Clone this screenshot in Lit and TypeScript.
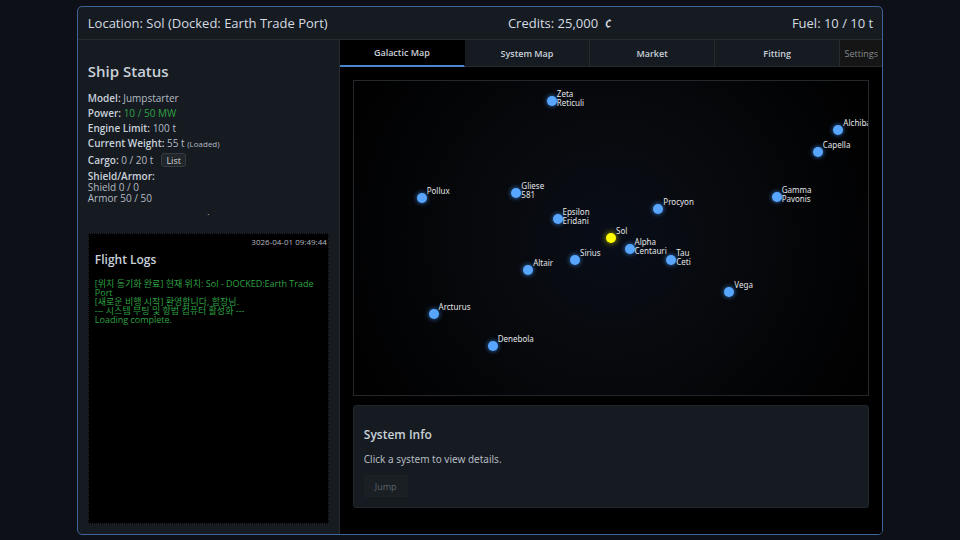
import { LitElement, html, css } from "lit";
import { customElement, property, state } from "lit/decorators.js";
import { classMap } from "lit/directives/class-map.js";
import { styleMap } from "lit/directives/style-map.js";

interface StarSystem {
  name: string;
  x: number;
  y: number;
}

const SYSTEMS: StarSystem[] = [
  { name: "Zeta Reticuli", x: 38.5, y: 6.4 },
  { name: "Alchiba", x: 94.2, y: 15.5 },
  { name: "Capella", x: 90.2, y: 22.5 },
  { name: "Pollux", x: 13.2, y: 37.4 },
  { name: "Gliese 581", x: 31.6, y: 35.8 },
  { name: "Gamma Pavonis", x: 82.2, y: 37.1 },
  { name: "Epsilon Eridani", x: 39.6, y: 43.8 },
  { name: "Procyon", x: 59.2, y: 40.8 },
  { name: "Sol", x: 50, y: 50 },
  { name: "Alpha Centauri", x: 53.6, y: 53.5 },
  { name: "Sirius", x: 43, y: 57 },
  { name: "Tau Ceti", x: 61.7, y: 57 },
  { name: "Altair", x: 33.9, y: 60.3 },
  { name: "Vega", x: 73, y: 67.2 },
  { name: "Arcturus", x: 15.5, y: 74.1 },
  { name: "Denebola", x: 27, y: 84.5 },
];

const TABS = ["Galactic Map", "System Map", "Market", "Fitting"];

const LOGS = [
  "[위치 동기화 완료] 현재 위치: Sol - DOCKED:Earth Trade Port",
  "[새로운 비행 시작] 환영합니다, 함장님.",
  "--- 시스템 부팅 및 항법 컴퓨터 활성화 ---",
  "Loading complete.",
];

@customElement("galactic-map")
export class GalacticMap extends LitElement {
  @property() current = "Sol";

  static styles = css`
    :host {
      display: block;
      position: relative;
      overflow: hidden;
      border: 1px solid #24282c;
      background: radial-gradient(circle, #080d18 0%, #080a0e 35%, #000 100%);
    }
    .star {
      position: absolute;
      width: 10px;
      height: 10px;
      margin: -5px 0 0 -5px;
      padding: 0;
      border: 0;
      border-radius: 50%;
      background: #58a6ff;
      box-shadow: 0 0 5px #3a7fd0;
      font: inherit;
      cursor: pointer;
    }
    .current {
      background: #ff0;
      box-shadow: 0 0 6px #b5b500;
    }
    .label {
      position: absolute;
      left: 10px;
      top: -7px;
      width: min-content;
      font-family: "Noto Sans", "Noto Sans CJK KR", sans-serif;
      font-size: 8px;
      line-height: 9px;
      color: #e2e5e8;
      text-align: left;
    }
  `;

  render() {
    return SYSTEMS.map(
      (s) => html`<button
        class=${classMap({ star: true, current: s.name === this.current })}
        style=${styleMap({ left: `${s.x}%`, top: `${s.y}%` })}
      ><span class="label">${s.name}</span></button>`
    );
  }
}

@customElement("ship-status")
export class ShipStatus extends LitElement {
  static styles = css`
    :host {
      display: block;
    }
    h2 {
      margin: 0 0 12px;
      font-size: 15px;
      line-height: 20px;
      font-weight: 600;
    }
    .rows {
      display: flex;
      flex-direction: column;
      gap: 4px;
      font-size: 10px;
      line-height: 11px;
      color: #b4bac1;
    }
    .rows p {
      margin: 0;
    }
    b {
      font-weight: 600;
      color: #c9d1d9;
    }
    .good {
      color: #2ea043;
    }
    .small {
      font-size: 8px;
    }
    .cargo {
      display: flex;
      align-items: center;
      gap: 8px;
    }
    .list {
      height: 14px;
      padding: 0 4px;
      border: 1px solid #363b42;
      border-radius: 3px;
      background: #21262a;
      color: #d5d9dd;
      font: inherit;
      font-size: 9px;
      line-height: 11px;
    }
    .note {
      margin: 3px 0 0;
      font-size: 8px;
      line-height: 10px;
      text-align: center;
    }
  `;

  render() {
    return html`
      <h2>Ship Status</h2>
      <div class="rows">
        <p><b>Model:</b> Jumpstarter</p>
        <p><b>Power:</b> <span class="good">10 / 50 MW</span></p>
        <p><b>Engine Limit:</b> 100 t</p>
        <p><b>Current Weight:</b> 55 t <span class="small">(Loaded)</span></p>
        <div class="cargo">
          <span><b>Cargo:</b> 0 / 20 t</span><button class="list">List</button>
        </div>
        <p><b>Shield/Armor:</b><br />Shield 0 / 0<br />Armor 50 / 50</p>
      </div>
      <p class="note">.</p>
    `;
  }
}

@customElement("flight-logs")
export class FlightLogs extends LitElement {
  static styles = css`
    :host {
      display: block;
      padding: 3px 6px 6px;
      border: 1px dotted #24282c;
      background: #000;
    }
    time {
      display: block;
      margin-right: -5px;
      font-size: 8px;
      line-height: 10px;
      text-align: right;
      color: #b4bac1;
    }
    h3 {
      margin: 5px 0 11px;
      font-size: 12px;
      line-height: 16px;
      font-weight: 600;
    }
    p {
      margin: 0;
      font-size: 9px;
      line-height: 9px;
      color: #2ea043;
    }
  `;

  render() {
    return html`
      <time datetime="3026-04-01T09:49:44">3026-04-01 09:49:44</time>
      <h3>Flight Logs</h3>
      ${LOGS.map((line) => html`<p>${line}</p>`)}
    `;
  }
}

@customElement("app-root")
export class AppRoot extends LitElement {
  @state() private tab = TABS[0];

  static styles = css`
    :host {
      display: flex;
      box-sizing: border-box;
      min-height: 100vh;
      padding: 6px 8% 5px;
      background: #0d1117;
      color: #c9d1d9;
      font-family: "Open Sans", "Noto Sans CJK KR", sans-serif;
    }
    .frame {
      flex: 1;
      display: flex;
      flex-direction: column;
      overflow: hidden;
      border: 1px solid #3f6496;
      border-radius: 5px;
      background: #161b22;
    }
    header {
      display: flex;
      align-items: center;
      justify-content: space-between;
      padding: 6px 9px 6px 10px;
      border-bottom: 1px solid #262b30;
      font-size: 13px;
      line-height: 20px;
      font-weight: 500;
      color: #d5dbe1;
    }
    .unit {
      margin-left: 3px;
      font-style: italic;
      font-weight: 600;
    }
    .body {
      flex: 1;
      display: grid;
      grid-template-columns: 262px 1fr;
    }
    aside {
      display: flex;
      flex-direction: column;
      padding: 21px 10px 10px;
      border-right: 1px solid #262b30;
    }
    flight-logs {
      flex: 1;
      margin-top: 16px;
    }
    main {
      display: flex;
      flex-direction: column;
      background: #000;
    }
    nav {
      display: flex;
      background: #161b22;
    }
    .tab {
      flex: 1;
      height: 27px;
      padding: 0;
      border: 0;
      border-right: 1px solid #262b30;
      border-bottom: 1px solid #262b30;
      background: none;
      color: #c9d1d9;
      font: inherit;
      font-size: 9px;
      font-weight: 600;
    }
    .active {
      border-bottom: 2px solid #4a86cc;
      border-right-color: #000;
      background: #000;
    }
    .settings {
      flex: 0 0 42px;
      border-right: 0;
      background: #151515;
      color: #85898d;
      font-weight: 400;
    }
    .content {
      flex: 1;
      display: flex;
      flex-direction: column;
      gap: 9px;
      padding: 13px 13px 26px;
    }
    galactic-map {
      flex: 1;
    }
    .info {
      padding: 21px 10px 10px;
      border: 1px solid #21262a;
      border-radius: 3px;
      background: #161b22;
    }
    .info h3 {
      margin: 0 0 9px;
      font-size: 12px;
      line-height: 16px;
      font-weight: 600;
    }
    .info p {
      margin: 0 0 9px;
      font-family: "Noto Sans", "Noto Sans CJK KR", sans-serif;
      font-size: 10px;
      line-height: 14px;
      color: #b4bac1;
    }
    .jump {
      display: block;
      height: 22px;
      padding: 0 10px;
      border: 1px solid #1b2025;
      background: #1a1f24;
      color: #5c626a;
      font: inherit;
      font-size: 9px;
    }
  `;

  private renderTab(name: string) {
    return html`<button
      class=${classMap({ tab: true, active: name === this.tab })}
      @click=${() => (this.tab = name)}
    >${name}</button>`;
  }

  render() {
    return html`
      <div class="frame">
        <header>
          <span>Location: Sol (Docked: Earth Trade Port)</span>
          <span>Credits: 25,000 <span class="unit">¢</span></span>
          <span>Fuel: 10 / 10 t</span>
        </header>
        <div class="body">
          <aside>
            <ship-status></ship-status>
            <flight-logs></flight-logs>
          </aside>
          <main>
            <nav>
              ${TABS.map((name) => this.renderTab(name))}
              <button class="tab settings">Settings</button>
            </nav>
            <div class="content">
              <galactic-map></galactic-map>
              <section class="info">
                <h3>System Info</h3>
                <p>Click a system to view details.</p>
                <button class="jump" disabled>Jump</button>
              </section>
            </div>
          </main>
        </div>
      </div>
    `;
  }
}
